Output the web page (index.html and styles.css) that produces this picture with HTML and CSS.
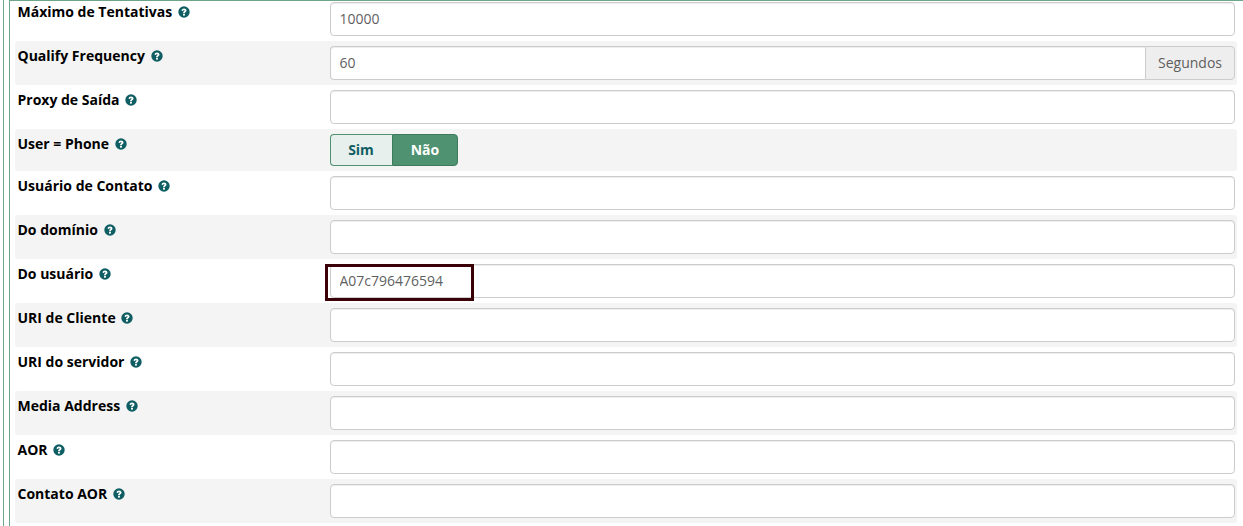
FILE: index.html
```html
<!DOCTYPE html>
<html lang="pt">
<head>
<meta charset="utf-8">
<title>Formulário</title>
<link rel="stylesheet" href="styles.css">
</head>
<body>
<svg width="0" height="0" class="defs" aria-hidden="true"><symbol id="q" viewBox="0 0 12 12"><circle cx="6" cy="6" r="5.7" fill="#0f5e63"/><path d="M3.6 4.7C3.6 3.3 4.7 2.5 6 2.5s2.5.8 2.5 2.1c0 1.8-1.6 1.6-1.6 2.7H5c0-1.9 1.5-1.9 1.5-2.6 0-.4-.2-.6-.6-.6-.5 0-.7.3-.7.8z" fill="#fff"/><rect x="5" y="7.9" width="1.9" height="1.7" fill="#fff"/></symbol></svg>
<div class="rail"></div>
<main class="panel">
  <form class="form">
    <div class="row first"><label class="lbl">Máximo de Tentativas <svg class="help"><use href="#q"/></svg></label><input class="field" value="10000"></div>
    <div class="row alt"><label class="lbl">Qualify Frequency <svg class="help"><use href="#q"/></svg></label><div class="group"><input class="field joined" value="60"><span class="addon">Segundos</span></div></div>
    <div class="row"><label class="lbl">Proxy de Saída <svg class="help"><use href="#q"/></svg></label><input class="field"></div>
    <div class="row alt"><label class="lbl">User = Phone <svg class="help"><use href="#q"/></svg></label><div class="toggle"><span class="opt">Sim</span><span class="opt on">Não</span></div></div>
    <div class="row"><label class="lbl">Usuário de Contato <svg class="help"><use href="#q"/></svg></label><input class="field"></div>
    <div class="row alt"><label class="lbl">Do domínio <svg class="help"><use href="#q"/></svg></label><input class="field"></div>
    <div class="row"><label class="lbl">Do usuário <svg class="help"><use href="#q"/></svg></label><div class="marked"><input class="field" value="A07c796476594"><span class="mark"></span></div></div>
    <div class="row alt"><label class="lbl">URI de Cliente <svg class="help"><use href="#q"/></svg></label><input class="field"></div>
    <div class="row"><label class="lbl">URI do servidor <svg class="help"><use href="#q"/></svg></label><input class="field"></div>
    <div class="row alt"><label class="lbl">Media Address <svg class="help"><use href="#q"/></svg></label><input class="field"></div>
    <div class="row"><label class="lbl">AOR <svg class="help"><use href="#q"/></svg></label><input class="field"></div>
    <div class="row alt"><label class="lbl">Contato AOR <svg class="help"><use href="#q"/></svg></label><input class="field"></div>
  </form>
</main>
</body>
</html>
```
FILE: styles.css
```css
* { box-sizing: border-box; }
html, body { margin: 0; height: 526px; overflow: hidden; background: #fff; }
body { display: flex; font-family: "Open Sans", "Liberation Sans", sans-serif; font-size: 14px; color: #000; }
.defs { position: absolute; }
.rail { width: 4px; margin-left: 3px; margin-right: 2px; border-left: 1px solid #6ea589; flex: none; }
.panel { flex: 1; border-left: 1px solid #6ea589; border-top: 1px solid #6ea589; padding: 0 6px 0 5px; }
.form { display: flex; flex-direction: column; }
.row { display: flex; align-items: flex-start; height: 44px; padding: 5px 2px 5px 2.5px; border-radius: 3px; }
.row.first { height: 40px; padding-top: 1px; }
.row.alt { background: #f4f4f4; }
.row:nth-child(4) { height: 42px; }
.lbl { width: 312.5px; flex: none; font-weight: 700; line-height: 20px; display: flex; align-items: center; gap: 2px; white-space: pre; }
.help { width: 12px; height: 12px; }
.field { flex: 1; display: block; width: 100%; min-width: 0; height: 34px; padding: 4px 8.5px 6px; font: 14px "Open Sans", "Liberation Sans", sans-serif; color: #5f5f5f; background: #fff; border: 1px solid #ccc; border-radius: 4px; box-shadow: inset 0 1px 1px rgba(0,0,0,.075); }
.group { flex: 1; display: flex; }
.joined { border-radius: 4px 0 0 4px; border-right: 0; }
.addon { width: 90px; flex: none; height: 34px; line-height: 31px; text-align: center; color: #5f5f5f; background: #eee; border: 1px solid #ccc; border-radius: 0 4px 4px 0; }
.toggle { display: flex; height: 32px; font-weight: 700; }
.opt { line-height: 30px; text-align: center; border: 1px solid #4e9271; }
.opt:first-child { width: 62px; color: #0f5e63; background: #e7f0ec; border-radius: 4px 0 0 4px; border-right: 0; padding-right: 1px; }
.opt.on { width: 66px; color: #fff; background: #4e9271; border-color: #3b7a5c; border-radius: 0 4px 4px 0; }
.marked { flex: 1; position: relative; display: flex; }
.mark { position: absolute; left: -5px; top: 0; width: 149px; height: 37px; border: 3px solid #3a0008; }
```
